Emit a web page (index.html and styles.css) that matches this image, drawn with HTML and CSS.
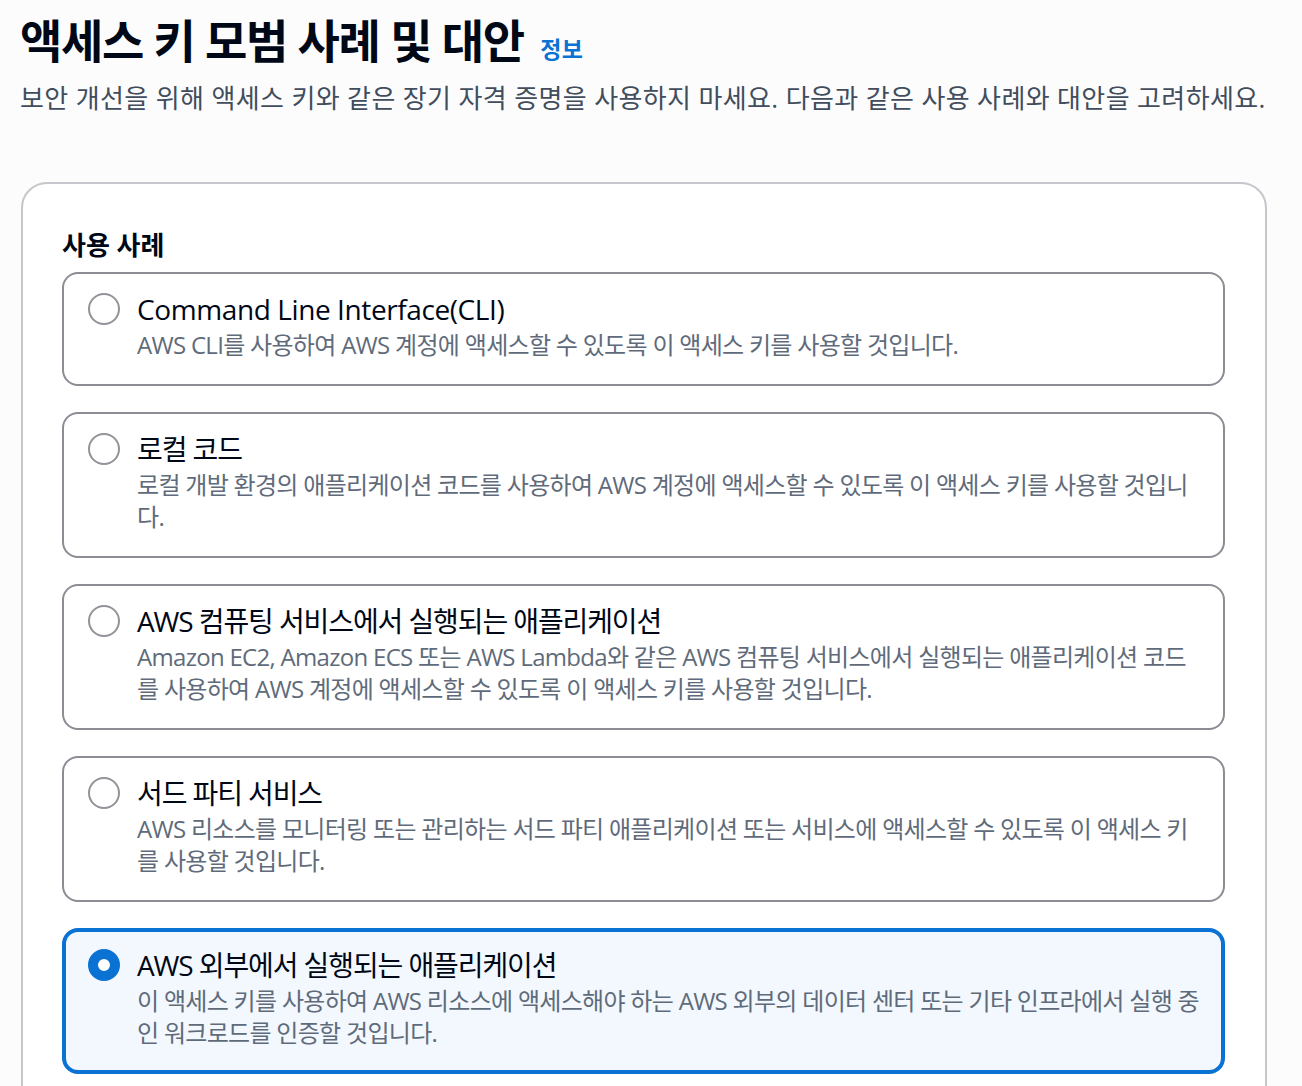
FILE: index.html
```html
<!DOCTYPE html>
<html lang="ko">
<head>
    <meta charset="UTF-8">
    <meta name="viewport" content="width=device-width, initial-scale=1.0">
    <title>액세스 키 모범 사례 및 대안</title>
    <link rel="stylesheet" href="styles.css">
</head>
<body>
    <div class="page">
        <div class="crumb">2단계 · 모범 사례 및 대안</div>
        <h1 class="title">액세스 키 모범 사례 및 대안 <a href="#" class="info">정보</a></h1>
        <p class="subtitle">보안 개선을 위해 액세스 키와 같은 장기 자격 증명을 사용하지 마세요. 다음과 같은 사용 사례와 대안을 고려하세요.</p>

        <div class="card">
            <h2>사용 사례</h2>
            <div class="tiles">
                <label class="tile">
                    <span class="radio"></span>
                    <span class="tile-body">
                        <span class="tile-title latin">Command Line Interface(CLI)</span>
                        <span class="tile-desc">AWS CLI를 사용하여 AWS 계정에 액세스할 수 있도록 이 액세스 키를 사용할 것입니다.</span>
                    </span>
                </label>
                <label class="tile">
                    <span class="radio"></span>
                    <span class="tile-body">
                        <span class="tile-title">로컬 코드</span>
                        <span class="tile-desc">로컬 개발 환경의 애플리케이션 코드를 사용하여 AWS 계정에 액세스할 수 있도록 이 액세스 키를 사용할 것입니다.</span>
                    </span>
                </label>
                <label class="tile">
                    <span class="radio"></span>
                    <span class="tile-body">
                        <span class="tile-title">AWS 컴퓨팅 서비스에서 실행되는 애플리케이션</span>
                        <span class="tile-desc">Amazon EC2, Amazon ECS 또는 AWS Lambda와 같은 AWS 컴퓨팅 서비스에서 실행되는 애플리케이션 코드를 사용하여 AWS 계정에 액세스할 수 있도록 이 액세스 키를 사용할 것입니다.</span>
                    </span>
                </label>
                <label class="tile">
                    <span class="radio"></span>
                    <span class="tile-body">
                        <span class="tile-title">서드 파티 서비스</span>
                        <span class="tile-desc">AWS 리소스를 모니터링 또는 관리하는 서드 파티 애플리케이션 또는 서비스에 액세스할 수 있도록 이 액세스 키를 사용할 것입니다.</span>
                    </span>
                </label>
                <label class="tile selected">
                    <span class="radio"></span>
                    <span class="tile-body">
                        <span class="tile-title">AWS 외부에서 실행되는 애플리케이션</span>
                        <span class="tile-desc">이 액세스 키를 사용하여 AWS 리소스에 액세스해야 하는 AWS 외부의 데이터 센터 또는 기타 인프라에서 실행 중인 워크로드를 인증할 것입니다.</span>
                    </span>
                </label>
            </div>
        </div>
    </div>
</body>
</html>
```

FILE: styles.css
```css
body {
    margin: 0;
    background-color: #fcfcfc;
    font-family: "Open Sans", "Noto Sans CJK KR", sans-serif;
    color: #000716;
    overflow: hidden;
}

.page {
    padding: 0 35px 0 20px;
}

.crumb {
    margin-top: -21px;
    font-size: 20px;
    line-height: 24px;
    color: #5f6b7a;
    padding-left: 16px;
}

.title {
    margin: 9px 0 0;
    font-size: 46px;
    line-height: 56px;
    font-weight: 700;
    letter-spacing: -1.35px;
}

.info {
    font-size: 23px;
    font-weight: 700;
    color: #0972d3;
    text-decoration: none;
    margin-left: 6px;
    letter-spacing: 0.3px;
}

.subtitle {
    margin: 4px 0 0;
    font-size: 26px;
    line-height: 34px;
    letter-spacing: 0.37px;
    color: #414d5c;
}

.card {
    margin: 67px 0 0 1px;
    background-color: white;
    border: 2px solid #c6c6cd;
    border-radius: 26px;
    padding: 44px 40px 40px 39px;
}

.card h2 {
    margin: 0 0 10px;
    font-size: 26px;
    line-height: 34px;
    font-weight: 700;
}

.tiles {
    display: flex;
    flex-direction: column;
    gap: 26px;
}

.tile {
    display: flex;
    gap: 17px;
    border: 2px solid #8c8c94;
    border-radius: 16px;
    padding: 15px 22px 23px 24px;
    background-color: white;
}

.radio {
    flex: none;
    width: 32px;
    height: 32px;
    margin-top: 4px;
    border: 2px solid #929299;
    border-radius: 50%;
    box-sizing: border-box;
    background-color: white;
}

.tile-body {
    display: flex;
    flex-direction: column;
}

.tile-title {
    font-size: 28px;
    line-height: 40px;
    letter-spacing: -1.1px;
}

.tile-title.latin {
    letter-spacing: -0.4px;
}

.tile-desc {
    font-size: 24px;
    line-height: 32px;
    letter-spacing: -0.7px;
    color: #5f6b7a;
}

.tile.selected {
    border: 4px solid #0972d3;
    padding: 13px 20px 21px 22px;
    background-color: #f2f8fd;
}

.tile.selected .radio {
    border: 10px solid #0972d3;
}
```
